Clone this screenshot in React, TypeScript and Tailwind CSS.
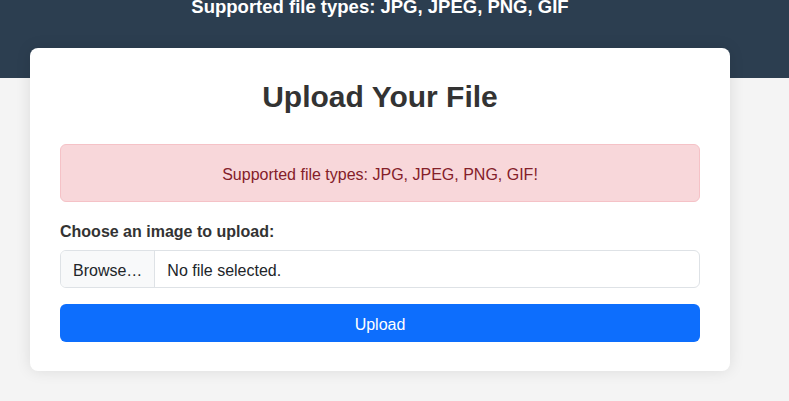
export default function App() {
  return (
    <div className="min-h-[401px] w-full bg-[#f4f4f4] font-['Liberation_Sans',Arial,sans-serif] text-[#333]">
      <header className="flow-root h-[78px] bg-[#2c3e50] text-white">
        <div className="w-[760px] text-center">
          <p className="mt-[-5px] text-[18.5px] font-bold leading-[24px]">Supported file types: JPG, JPEG, PNG, GIF</p>
        </div>
      </header>
      <div className="w-[760px]">
        <main className="mx-[30px] mt-[-30px] rounded-lg bg-white px-[30px] pt-[29px] pb-[29px] shadow-[0_0_15px_rgba(0,0,0,0.1)]">
          <h1 className="text-center text-[30px] font-bold leading-[40px]">Upload Your File</h1>
          <div className="mt-[27px] rounded-md border border-[#f5c2c7] bg-[#f8d7da] px-4 pt-[18px] pb-[14px] text-center text-[16px] leading-[24px] text-[#842029]">
            Supported file types: JPG, JPEG, PNG, GIF!
          </div>
          <form className="mt-[20px]">
            <label className="block text-[16px] font-bold leading-[20px]">Choose an image to upload:</label>
            <div className="mt-[8px] flex h-[38px] overflow-hidden rounded-md border border-[#dee2e6] bg-white text-[16px]">
              <span className="flex items-center border-r border-[#dee2e6] bg-[#f8f9fa] px-3 pt-[3px] text-[#212529]">Browse…</span>
              <span className="flex items-center px-3 pt-[3px] text-[#212529]">No file selected.</span>
            </div>
            <button type="button" className="mt-[16px] h-[38px] w-full rounded-md bg-[#0d6efd] pt-[3px] text-[16px] text-white">
              Upload
            </button>
          </form>
        </main>
      </div>
    </div>
  )
}
